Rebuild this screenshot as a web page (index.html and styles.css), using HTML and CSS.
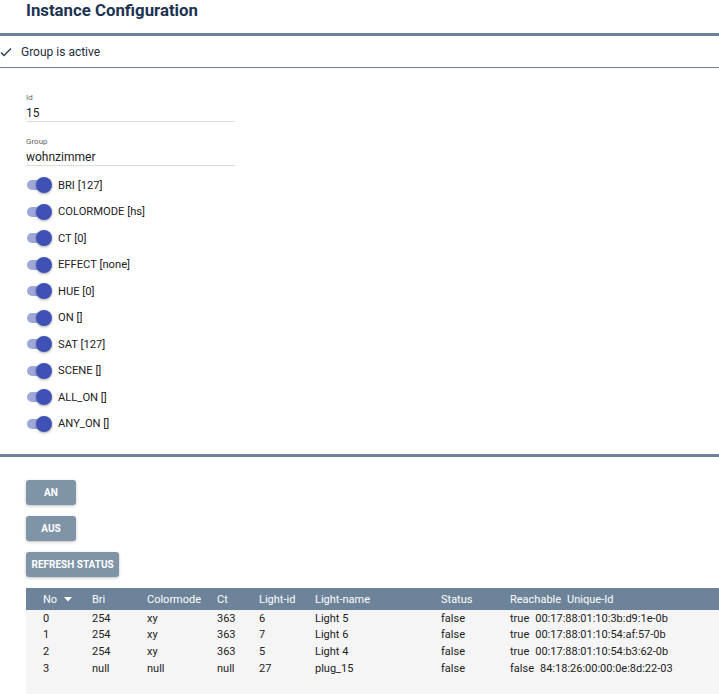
FILE: index.html
```html
<!DOCTYPE html>
<html>
<head>
<meta charset="utf-8">
<link rel="stylesheet" href="styles.css">
</head>
<body>
<div class="page">
  <header class="title-bar">
    <h1 class="title">Instance Configuration</h1>
  </header>
  <div class="active-row">
    <svg class="check" width="12" height="10" viewBox="0 0 12 10"><polyline points="1,5.5 4,8.5 11,1.5" fill="none" stroke="#2c3e50" stroke-width="1.4"/></svg>
    <span>Group is active</span>
  </div>
  <section class="form">
    <div class="field">
      <label class="field-label">Id</label>
      <div class="field-value">15</div>
    </div>
    <div class="field">
      <label class="field-label">Group</label>
      <div class="field-value">wohnzimmer</div>
    </div>
    <ul class="toggles">
      <li class="toggle-row"><span class="switch"><span class="track"></span><span class="thumb"></span></span>BRI [127]</li>
      <li class="toggle-row"><span class="switch"><span class="track"></span><span class="thumb"></span></span>COLORMODE [hs]</li>
      <li class="toggle-row"><span class="switch"><span class="track"></span><span class="thumb"></span></span>CT [0]</li>
      <li class="toggle-row"><span class="switch"><span class="track"></span><span class="thumb"></span></span>EFFECT [none]</li>
      <li class="toggle-row"><span class="switch"><span class="track"></span><span class="thumb"></span></span>HUE [0]</li>
      <li class="toggle-row"><span class="switch"><span class="track"></span><span class="thumb"></span></span>ON []</li>
      <li class="toggle-row"><span class="switch"><span class="track"></span><span class="thumb"></span></span>SAT [127]</li>
      <li class="toggle-row"><span class="switch"><span class="track"></span><span class="thumb"></span></span>SCENE []</li>
      <li class="toggle-row"><span class="switch"><span class="track"></span><span class="thumb"></span></span>ALL_ON []</li>
      <li class="toggle-row"><span class="switch"><span class="track"></span><span class="thumb"></span></span>ANY_ON []</li>
    </ul>
  </section>
  <section class="actions">
    <div class="buttons">
      <button class="btn btn-an">AN</button>
      <button class="btn btn-aus">AUS</button>
      <button class="btn">REFRESH STATUS</button>
    </div>
    <table class="lights">
      <thead>
        <tr>
          <th class="c-no">No <svg class="sort" width="8" height="5" viewBox="0 0 8 5"><polygon points="0,0 8,0 4,4.5" fill="#fff"/></svg></th>
          <th class="c-bri">Bri</th>
          <th class="c-cm">Colormode</th>
          <th class="c-ct">Ct</th>
          <th class="c-lid">Light-id</th>
          <th class="c-ln">Light-name</th>
          <th class="c-st">Status</th>
          <th class="c-re">Reachable<span class="uid-head">Unique-Id</span></th>
        </tr>
      </thead>
      <tbody>
        <tr><td>0</td><td>254</td><td>xy</td><td>363</td><td>6</td><td>Light 5</td><td>false</td><td>true<span class="uid">00:17:88:01:10:3b:d9:1e-0b</span></td></tr>
        <tr><td>1</td><td>254</td><td>xy</td><td>363</td><td>7</td><td>Light 6</td><td>false</td><td>true<span class="uid">00:17:88:01:10:54:af:57-0b</span></td></tr>
        <tr><td>2</td><td>254</td><td>xy</td><td>363</td><td>5</td><td>Light 4</td><td>false</td><td>true<span class="uid">00:17:88:01:10:54:b3:62-0b</span></td></tr>
        <tr><td>3</td><td>null</td><td>null</td><td>null</td><td>27</td><td>plug_15</td><td>false</td><td>false<span class="uid">84:18:26:00:00:0e:8d:22-03</span></td></tr>
        <tr class="filler"><td colspan="8"></td></tr>
      </tbody>
    </table>
  </section>
</div>
</body>
</html>
```

FILE: styles.css
```css
* { box-sizing: border-box; }
html, body { margin: 0; padding: 0; background: #fff; }
body {
  font-family: Roboto, "Liberation Sans", sans-serif;
  color: rgba(0,0,0,0.87);
  overflow: hidden;
}
.page { width: 719px; overflow: hidden; }

.title-bar {
  height: 36px;
  border-bottom: 3px solid #6c8298;
  padding-left: 26px;
}
.title {
  margin: 0;
  font-size: 16.8px;
  font-weight: 700;
  line-height: 21px;
  color: #1c3352;
}

.active-row {
  height: 32px;
  border-bottom: 1px solid #6c8298;
  display: flex;
  align-items: center;
  font-size: 12px;
  color: #1f2d3d;
  padding-top: 1px;
}
.check { margin-left: 0; margin-right: 9px; }

.form { padding: 24px 0 0 26px; height: 386px; }
.field { width: 209px; border-bottom: 1px solid #dcdcdc; margin-bottom: 14px; }
.field:last-of-type { margin-bottom: 0; }
.field-label { display: block; font-size: 8px; color: #666; line-height: 11px; }
.field-value { font-size: 12px; line-height: 16px; padding: 2px 0 0; color: #222; }

.toggles { list-style: none; margin: 6px 0 0; padding: 0; }
.toggle-row {
  height: 26.5px;
  display: flex;
  align-items: center;
  font-size: 11.2px;
  color: #222;
}
.switch { position: relative; width: 26px; height: 20px; margin-left: 1px; margin-right: 5px; }
.track {
  position: absolute; left: 0; top: 5px; width: 24px; height: 10px;
  border-radius: 5px; background: #9fa8da;
}
.thumb {
  position: absolute; left: 9px; top: 2px; width: 16px; height: 16px;
  border-radius: 50%; background: #3f51b5;
  box-shadow: 0 1px 3px rgba(0,0,0,0.35);
}

.actions { border-top: 3px solid #6c8298; padding: 23px 0 0 26px; }
.buttons { display: flex; flex-direction: column; align-items: flex-start; gap: 11px; }
.btn {
  font-family: Roboto, "Liberation Sans", sans-serif;
  height: 25px;
  border: none;
  border-radius: 3px;
  background: #8094a8;
  color: #fff;
  font-size: 10px;
  font-weight: 700;
  padding: 0 5.5px;
  box-shadow: 0 1px 3px rgba(0,0,0,0.25);
}
.btn-an, .btn-aus { width: 50px; }

.lights {
  margin-top: 11px;
  width: 760px;
  border-collapse: collapse;
  font-size: 11px;
  background: #f5f5f5;
}
.lights th {
  background: #6c8399;
  color: #fff;
  font-weight: 400;
  text-align: left;
  height: 22px;
  padding: 0;
  white-space: nowrap;
}
.lights td { padding: 0; height: 16.8px; line-height: 14px; white-space: nowrap; color: #222; }
.lights th:first-child, .lights td:first-child { padding-left: 17px; }
.c-no { width: 66px; }
.c-bri { width: 55px; }
.c-cm { width: 70px; }
.c-ct { width: 42px; }
.c-lid { width: 56px; }
.c-ln { width: 126px; }
.c-st { width: 69px; }
.sort { margin-left: 4px; vertical-align: 1px; }
.uid-head { margin-left: 6px; }
.uid { margin-left: 6px; }
.lights tbody tr:first-child td { padding-top: 1px; }
.filler td { height: 20px; }
```
